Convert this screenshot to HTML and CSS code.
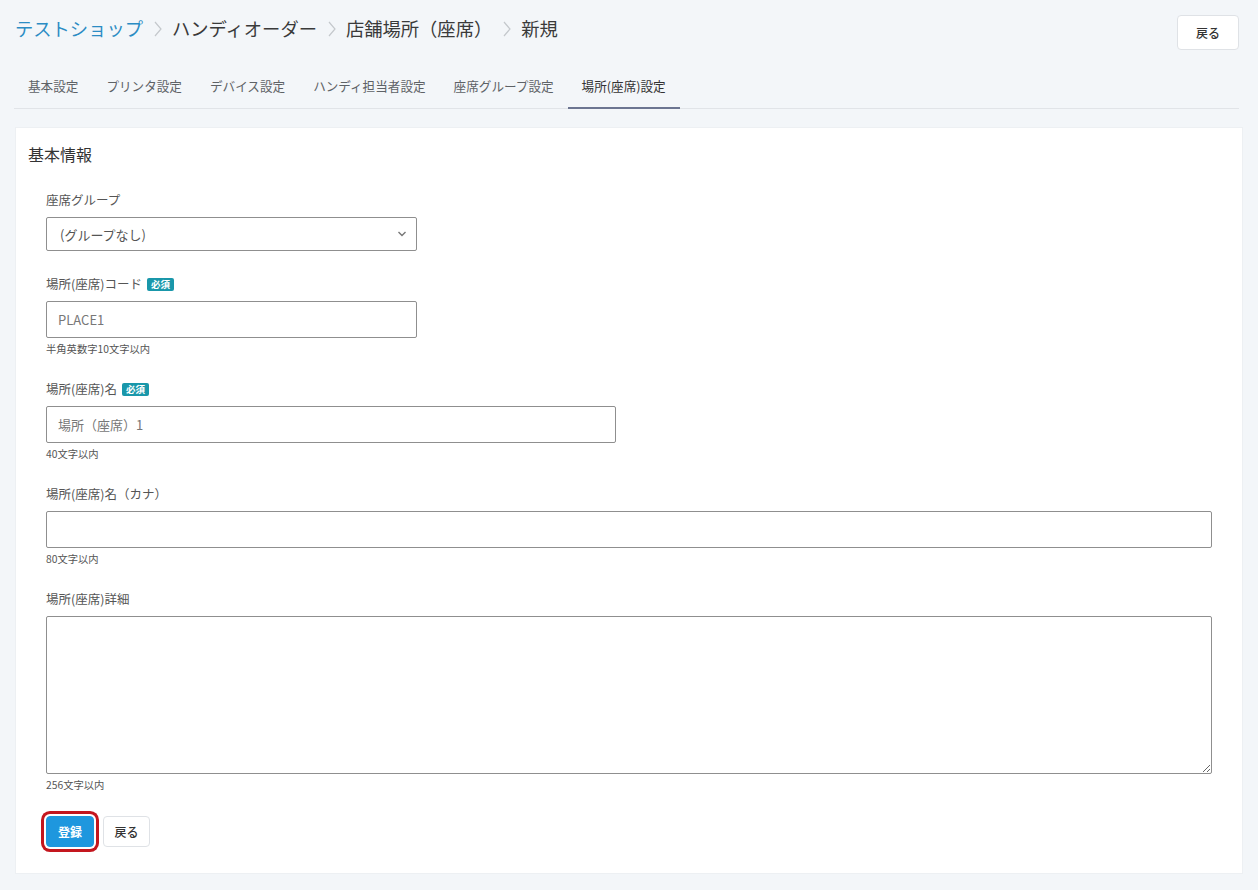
FILE: index.html
```html
<!DOCTYPE html>
<html lang="ja">
<head>
<meta charset="utf-8">
<title>場所(座席) 新規</title>
<link rel="stylesheet" href="styles.css">
</head>
<body>
<div class="page">
  <header class="topbar">
    <nav class="crumbs">
      <a class="crumb link" href="#">テストショップ</a>
      <svg class="sep" width="10" height="18" viewBox="0 0 10 18"><polyline points="2,2 8,9 2,16" fill="none" stroke="#c4c8cc" stroke-width="1.2"/></svg>
      <span class="crumb">ハンディオーダー</span>
      <svg class="sep" width="10" height="18" viewBox="0 0 10 18"><polyline points="2,2 8,9 2,16" fill="none" stroke="#c4c8cc" stroke-width="1.2"/></svg>
      <span class="crumb">店舗場所（座席）</span>
      <svg class="sep" width="10" height="18" viewBox="0 0 10 18"><polyline points="2,2 8,9 2,16" fill="none" stroke="#c4c8cc" stroke-width="1.2"/></svg>
      <span class="crumb">新規</span>
    </nav>
    <button class="btn btn-light top-back">戻る</button>
  </header>

  <ul class="tabs">
    <li class="tab">基本設定</li>
    <li class="tab">プリンタ設定</li>
    <li class="tab">デバイス設定</li>
    <li class="tab">ハンディ担当者設定</li>
    <li class="tab">座席グループ設定</li>
    <li class="tab active">場所(座席)設定</li>
  </ul>

  <section class="card">
    <h2 class="card-title">基本情報</h2>
    <form class="form">
      <div class="group">
        <label class="label">座席グループ</label>
        <div class="select w-sm">
          <span>(グループなし)</span>
          <svg width="10" height="6" viewBox="0 0 10 6"><polyline points="1.5,1 5,4.5 8.5,1" fill="none" stroke="#777" stroke-width="1.4"/></svg>
        </div>
      </div>
      <div class="group">
        <label class="label">場所(座席)コード <span class="badge">必須</span></label>
        <input class="input w-sm" type="text" placeholder="PLACE1">
        <div class="hint">半角英数字10文字以内</div>
      </div>
      <div class="group">
        <label class="label">場所(座席)名 <span class="badge">必須</span></label>
        <input class="input w-md" type="text" placeholder="場所（座席）1">
        <div class="hint">40文字以内</div>
      </div>
      <div class="group">
        <label class="label">場所(座席)名（カナ）</label>
        <input class="input" type="text">
        <div class="hint">80文字以内</div>
      </div>
      <div class="group">
        <label class="label">場所(座席)詳細</label>
        <textarea class="textarea"></textarea>
        <div class="hint">256文字以内</div>
      </div>
      <div class="actions">
        <button type="button" class="btn btn-primary">登録</button>
        <button type="button" class="btn btn-light">戻る</button>
      </div>
    </form>
  </section>
</div>
</body>
</html>
```

FILE: styles.css
```css
* { box-sizing: border-box; }
html, body { margin: 0; padding: 0; }
body {
  background: #f3f6f9;
  font-family: "Noto Sans CJK JP", "Noto Sans", sans-serif;
  color: #333;
}
.page {
  padding: 15px 15px 17px 14px;
}
.topbar {
  display: flex;
  justify-content: space-between;
  align-items: flex-start;
  padding-right: 4px;
}
.crumbs {
  display: flex;
  align-items: center;
  gap: 9px;
  height: 27px;
  padding-left: 1px;
}
.crumb {
  font-size: 18.3px;
  line-height: 27px;
  color: #3a3a3a;
  text-decoration: none;
}
.crumb.link { color: #2b8cc4; }
.sep { margin: 0 0 0 1px; }
.btn {
  font-family: inherit;
  font-size: 12px;
  font-weight: 500;
  border-radius: 4px;
  cursor: pointer;
  padding: 0;
}
.btn-light {
  background: #fff;
  border: 1px solid #dfe2e6;
  color: #333;
}
.top-back {
  width: 62px;
  height: 35px;
}
.tabs {
  list-style: none;
  margin: 16px 0 0;
  padding: 0;
  display: flex;
  border-bottom: 1px solid #e1e4e8;
  margin-right: 4px;
}
.tab {
  padding: 11px 14px 12px;
  font-size: 12.6px;
  line-height: 18px;
  color: #5e6266;
  border-bottom: 2px solid transparent;
  margin-bottom: -1px;
}
.tab.active {
  color: #333;
  border-bottom-color: #6c7591;
}
.card {
  margin-top: 18px;
  margin-left: 1px;
  background: #fff;
  border: 1px solid #edf0f3;
  padding: 14px 30px 26px 12px;
}
.card-title {
  margin: 0;
  font-size: 16px;
  font-weight: 400;
  line-height: 24px;
  color: #333;
}
.form {
  padding-left: 18px;
  margin-top: 25px;
}
.group {
  display: flex;
  flex-direction: column;
  align-items: flex-start;
  margin-bottom: 24px;
}
.label {
  font-size: 12.5px;
  line-height: 18px;
  color: #555;
  margin-bottom: 8px;
  display: flex;
  align-items: center;
  gap: 5px;
}
.badge {
  display: inline-block;
  background: #1997aa;
  color: #fff;
  font-size: 9.5px;
  font-weight: 700;
  line-height: 13px;
  padding: 0 4px;
  border-radius: 2px;
}
.input, .select, .textarea {
  width: 100%;
  border: 1px solid #8f8f8f;
  border-radius: 2px;
  background: #fff;
  font-family: inherit;
  font-size: 13px;
  color: #555;
}
.input {
  height: 37px;
  padding: 0 11px;
  outline: none;
}
.input::placeholder { color: #777; }
.select {
  height: 34px;
  padding: 0 9px 0 13px;
  display: flex;
  align-items: center;
  justify-content: space-between;
}
.w-sm { width: 371px; }
.w-md { width: 570px; }
.textarea {
  height: 158px;
  resize: vertical;
  display: block;
}
.hint {
  font-size: 10.3px;
  line-height: 15px;
  color: #555;
  margin-top: 3px;
}
.actions {
  display: flex;
  gap: 9px;
  align-items: center;
}
.btn-primary {
  width: 48px;
  height: 31px;
  background: #1e97de;
  border: 1px solid #1e97de;
  color: #fff;
  font-weight: 700;
  box-shadow: 0 0 0 2px #fff, 0 0 0 5px #c4161e;
  border-radius: 4px;
}
.actions .btn-light {
  width: 47px;
  height: 31px;
}
```
